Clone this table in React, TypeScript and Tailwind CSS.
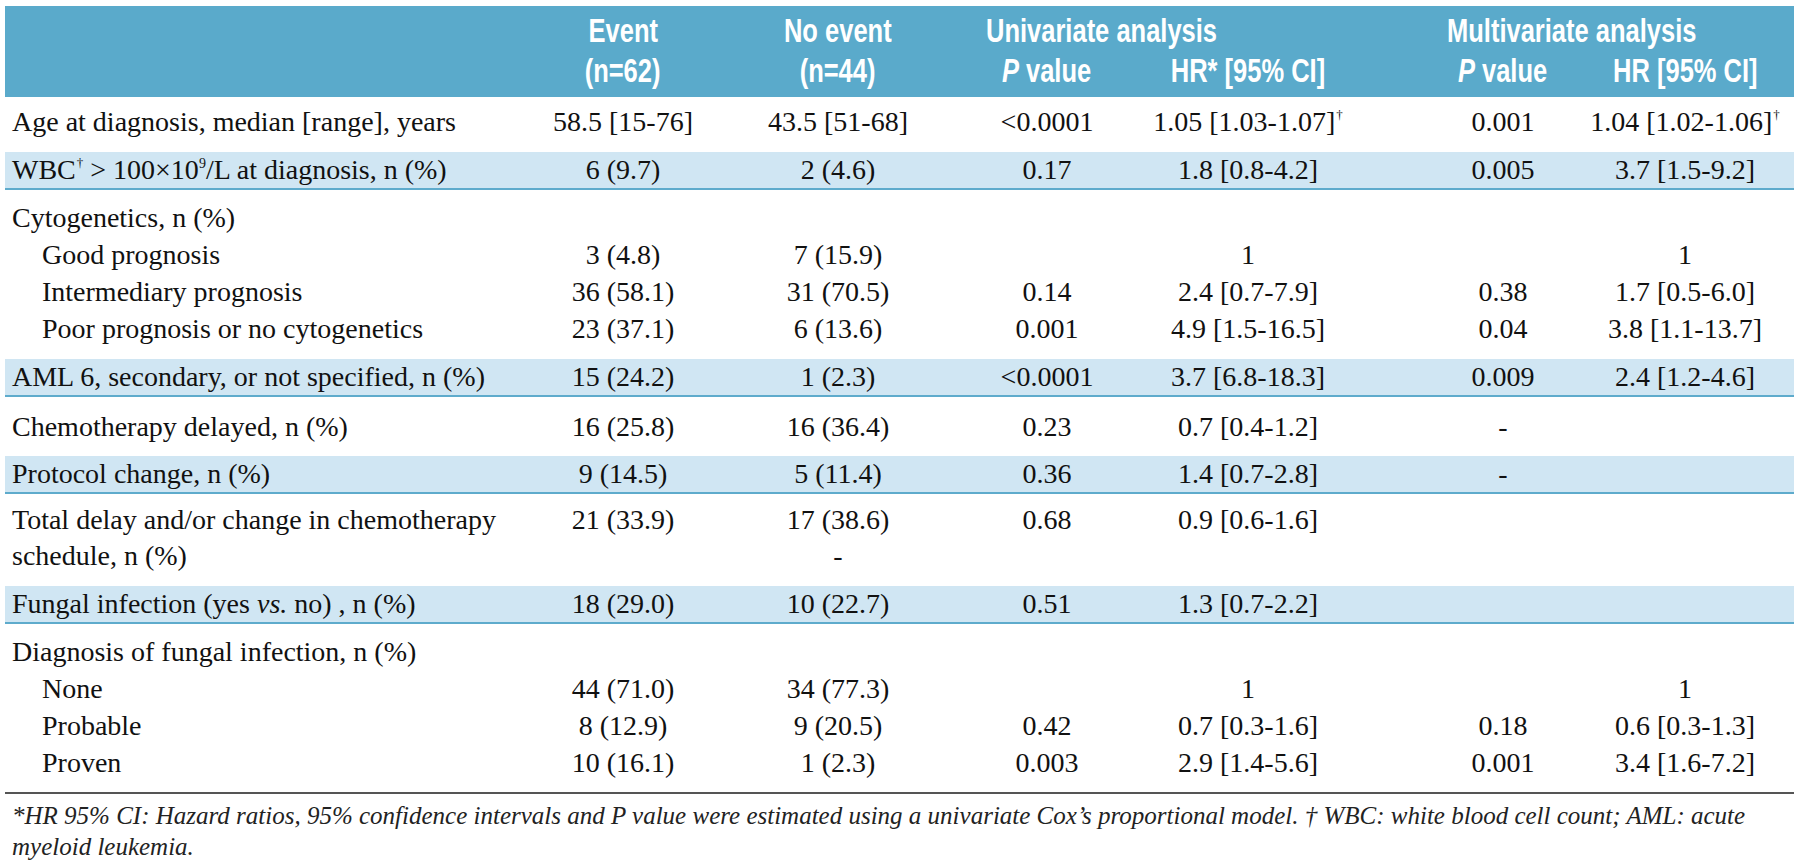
import type { ReactNode } from 'react';

const COLS = 'grid grid-cols-[515px_206px_224px_194px_208px_68px_166px_198px_1fr]';

type Line = {
  label: ReactNode;
  indent?: boolean;
  cells?: ReactNode[]; // event, no event, uni P, uni HR, multi P, multi HR
};

function Dag() {
  return <sup className="text-[13px] top-[-0.9em] ml-[1px]">†</sup>;
}

// header text is a bold condensed face; squeeze the regular bold one
function Narrow({ children, left }: { children: ReactNode; left?: boolean }) {
  return (
    <span className={`inline-block whitespace-nowrap scale-x-[0.75] ${left ? 'origin-left' : 'origin-center'}`}>
      {children}
    </span>
  );
}

function DataLine({ line, lh = 'leading-[37px]' }: { line: Line; lh?: string }) {
  const c = line.cells ?? [];
  return (
    <div className={`${COLS} ${lh}`}>
      <div className={line.indent ? 'pl-[37px]' : 'pl-[7px]'}>{line.label}</div>
      <div className="text-center">{c[0]}</div>
      <div className="text-center">{c[1]}</div>
      <div className="text-center">{c[2]}</div>
      <div className="text-center">{c[3]}</div>
      <div />
      <div className="text-center">{c[4]}</div>
      <div className="text-center">{c[5]}</div>
      <div />
    </div>
  );
}

function Band({ line }: { line: Line }) {
  return (
    <div className="bg-[#d0e6f3] border-b-2 border-[#5eabcc]">
      <DataLine line={line} lh="leading-[36px]" />
    </div>
  );
}

function Header() {
  return (
    <div className="bg-[#5aaacb] text-white font-bold font-['Liberation_Sans',sans-serif] text-[34px] leading-[40px] pt-[4px] pb-[7px]">
      <div className={COLS}>
        <div />
        <div className="text-center">
          <Narrow>Event</Narrow>
        </div>
        <div className="text-center">
          <Narrow>No event</Narrow>
        </div>
        <div className="col-span-2 pl-[36px]">
          <Narrow left>Univariate analysis</Narrow>
        </div>
        <div />
        <div className="col-span-2 pl-[27px]">
          <Narrow left>Multivariate analysis</Narrow>
        </div>
        <div />
      </div>
      <div className={COLS}>
        <div />
        <div className="text-center">
          <Narrow>(n=62)</Narrow>
        </div>
        <div className="text-center">
          <Narrow>(n=44)</Narrow>
        </div>
        <div className="text-center">
          <Narrow>
            <i>P</i> value
          </Narrow>
        </div>
        <div className="text-center">
          <Narrow>HR* [95% CI]</Narrow>
        </div>
        <div />
        <div className="text-center">
          <Narrow>
            <i>P</i> value
          </Narrow>
        </div>
        <div className="text-center">
          <Narrow>HR [95% CI]</Narrow>
        </div>
        <div />
      </div>
    </div>
  );
}

export default function App() {
  return (
    <div className="w-[1800px] h-[866px] bg-white pt-[6px] px-[5px] text-[#111] font-['Liberation_Serif',serif] text-[28px]">
      <div className="w-[1789px]">
        <Header />

        <div className="pt-[6px] pb-[12px]">
          <DataLine
            line={{
              label: 'Age at diagnosis, median [range], years',
              cells: [
                '58.5 [15-76]',
                '43.5 [51-68]',
                '<0.0001',
                <span key="a">
                  1.05 [1.03-1.07]
                  <Dag />
                </span>,
                '0.001',
                <span key="b">
                  1.04 [1.02-1.06]
                  <Dag />
                </span>,
              ],
            }}
          />
        </div>

        <Band
          line={{
            label: (
              <span>
                WBC<Dag /> &gt; 100×10<sup className="text-[14px] top-[-0.8em]">9</sup>/L at diagnosis, n (%)
              </span>
            ),
            cells: ['6 (9.7)', '2 (4.6)', '0.17', '1.8 [0.8-4.2]', '0.005', '3.7 [1.5-9.2]'],
          }}
        />

        <div className="pt-[9px] pb-[12px]">
          <DataLine line={{ label: 'Cytogenetics, n (%)' }} />
          <DataLine line={{ label: 'Good prognosis', indent: true, cells: ['3 (4.8)', '7 (15.9)', '', '1', '', '1'] }} />
          <DataLine
            line={{
              label: 'Intermediary prognosis',
              indent: true,
              cells: ['36 (58.1)', '31 (70.5)', '0.14', '2.4 [0.7-7.9]', '0.38', '1.7 [0.5-6.0]'],
            }}
          />
          <DataLine
            line={{
              label: 'Poor prognosis or no cytogenetics',
              indent: true,
              cells: ['23 (37.1)', '6 (13.6)', '0.001', '4.9 [1.5-16.5]', '0.04', '3.8 [1.1-13.7]'],
            }}
          />
        </div>

        <Band
          line={{
            label: 'AML 6, secondary, or not specified, n (%)',
            cells: ['15 (24.2)', '1 (2.3)', '<0.0001', '3.7 [6.8-18.3]', '0.009', '2.4 [1.2-4.6]'],
          }}
        />

        <div className="py-[11px]">
          <DataLine
            line={{
              label: 'Chemotherapy delayed, n (%)',
              cells: ['16 (25.8)', '16 (36.4)', '0.23', '0.7 [0.4-1.2]', '-', ''],
            }}
          />
        </div>

        <Band
          line={{
            label: 'Protocol change, n (%)',
            cells: ['9 (14.5)', '5 (11.4)', '0.36', '1.4 [0.7-2.8]', '-', ''],
          }}
        />

        <div className="pt-[8px] pb-[12px]">
          <DataLine
            lh="leading-[36px]"
            line={{
              label: 'Total delay and/or change in chemotherapy schedule, n (%)',
              cells: [
                '21 (33.9)',
                <span key="c">
                  17 (38.6)
                  <br />-
                </span>,
                '0.68',
                '0.9 [0.6-1.6]',
                '',
                '',
              ],
            }}
          />
        </div>

        <Band
          line={{
            label: (
              <span>
                Fungal infection (yes <i>vs.</i> no) , n (%)
              </span>
            ),
            cells: ['18 (29.0)', '10 (22.7)', '0.51', '1.3 [0.7-2.2]', '', ''],
          }}
        />

        <div className="pt-[9px] pb-[11px] border-b-2 border-[#555]">
          <DataLine line={{ label: 'Diagnosis of fungal infection, n (%)' }} />
          <DataLine line={{ label: 'None', indent: true, cells: ['44 (71.0)', '34 (77.3)', '', '1', '', '1'] }} />
          <DataLine
            line={{
              label: 'Probable',
              indent: true,
              cells: ['8 (12.9)', '9 (20.5)', '0.42', '0.7 [0.3-1.6]', '0.18', '0.6 [0.3-1.3]'],
            }}
          />
          <DataLine
            line={{
              label: 'Proven',
              indent: true,
              cells: ['10 (16.1)', '1 (2.3)', '0.003', '2.9 [1.4-5.6]', '0.001', '3.4 [1.6-7.2]'],
            }}
          />
        </div>

        <p className="pt-[6px] pl-[7px] italic text-[25px] leading-[31px] text-[#222] whitespace-nowrap">
          *HR 95% CI: Hazard ratios, 95% confidence intervals and P value were estimated using a univariate Cox’s
          proportional model. † WBC: white blood cell count; AML: acute
          <br />
          myeloid leukemia.
        </p>
      </div>
    </div>
  );
}
